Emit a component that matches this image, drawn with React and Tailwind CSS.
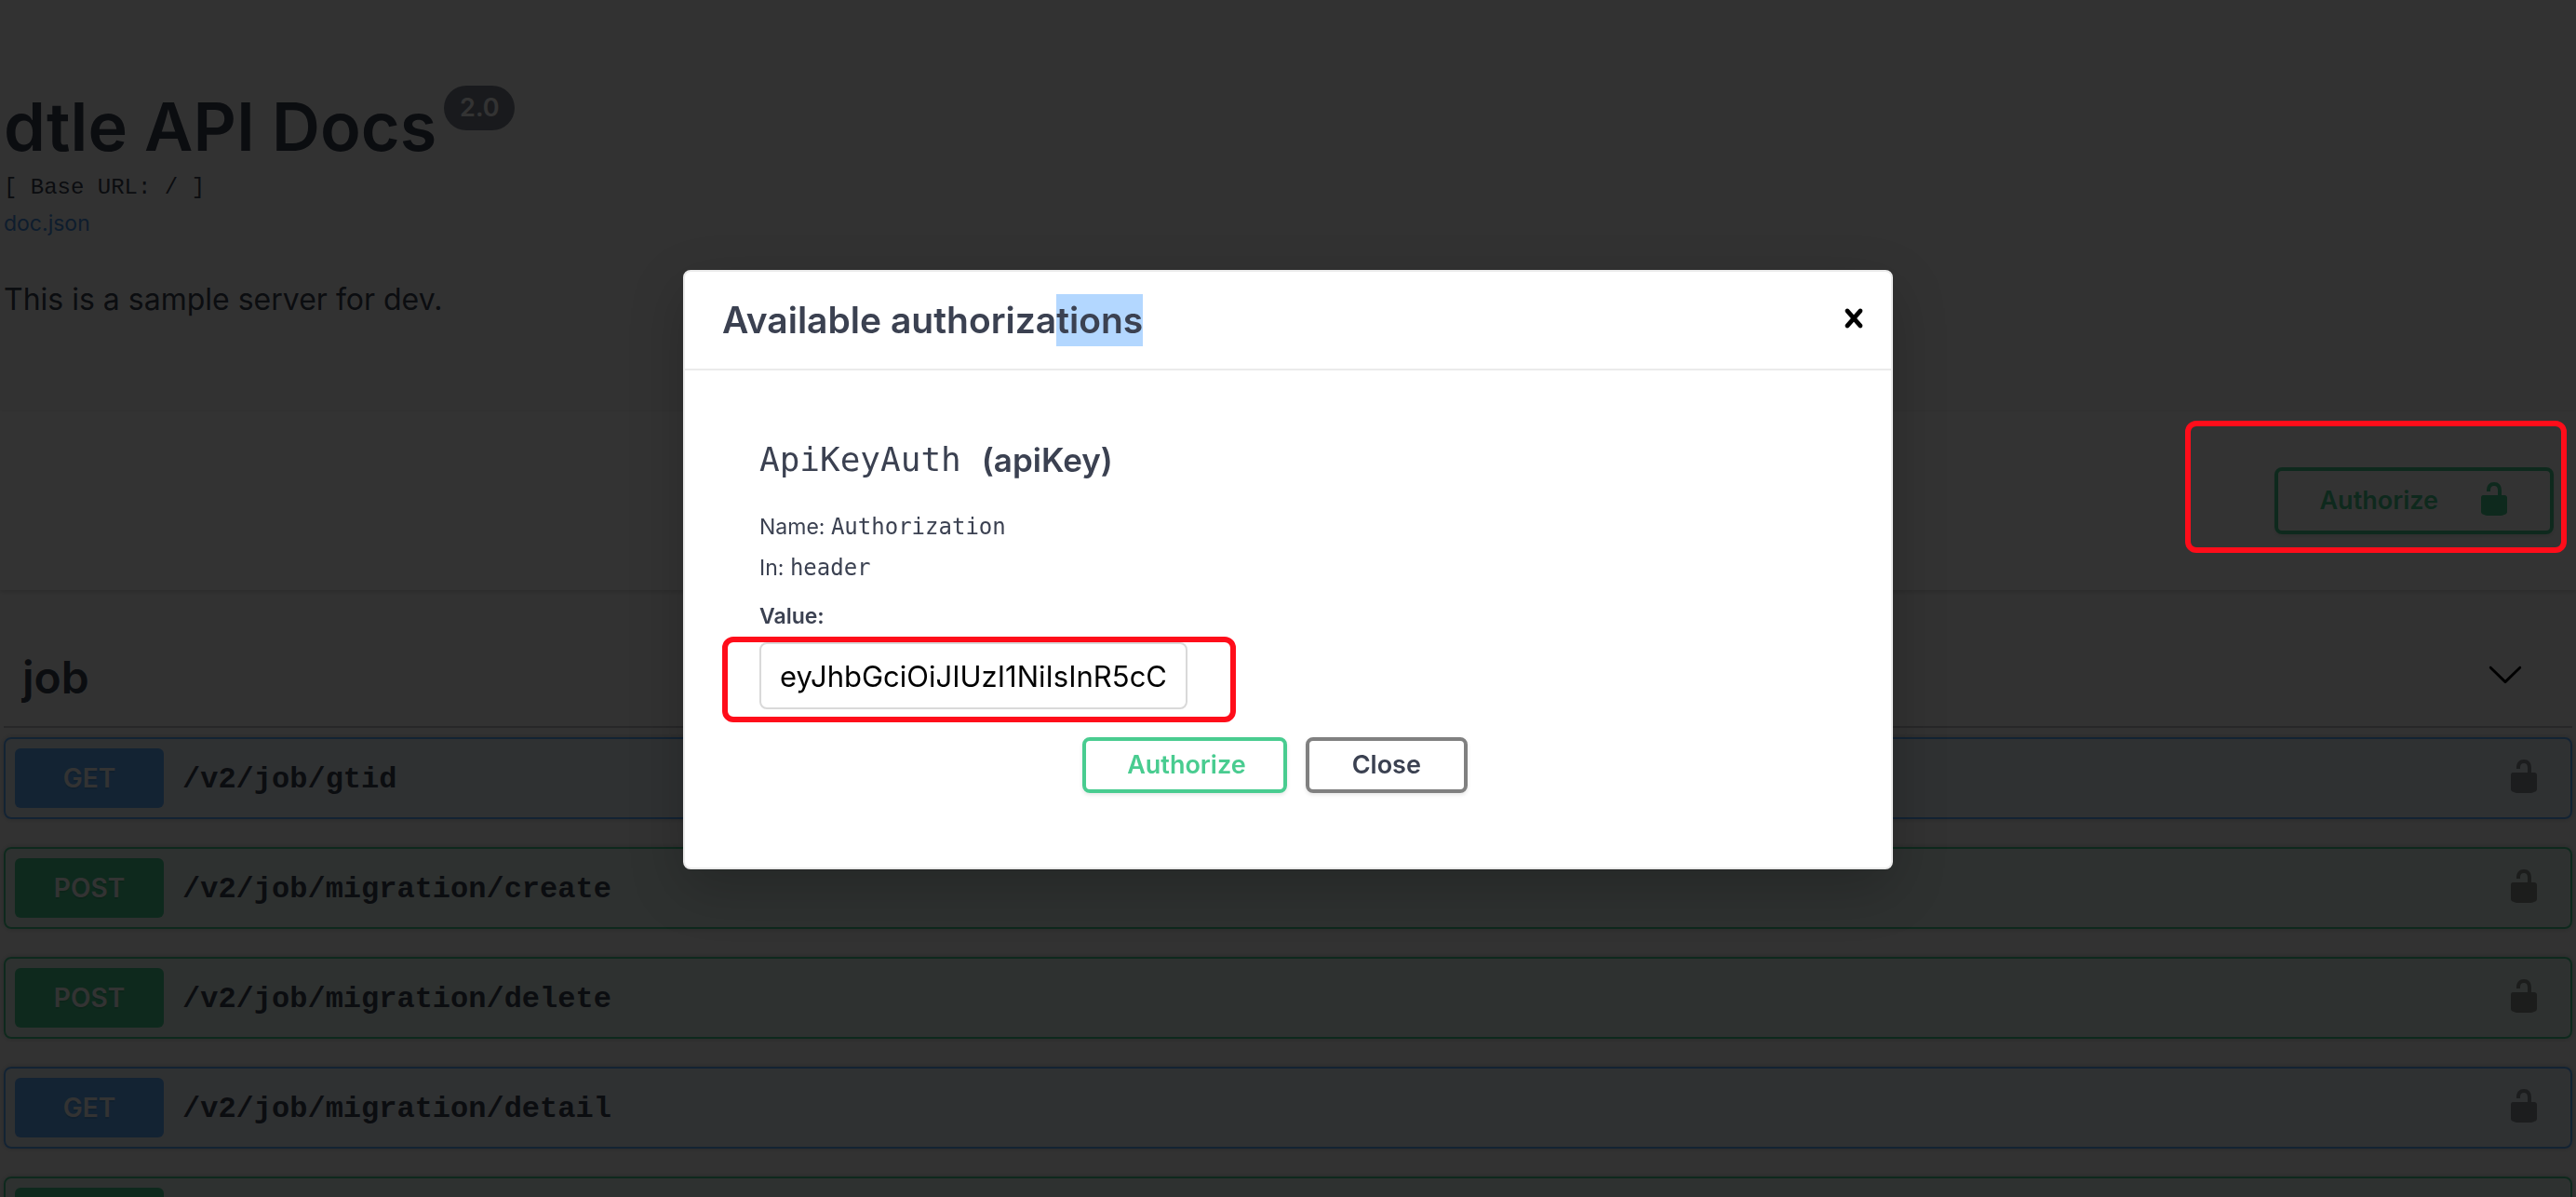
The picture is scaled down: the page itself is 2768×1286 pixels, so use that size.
import { useState } from "react";

function UnlockedIcon({ className }) {
  return (
    <svg viewBox="0 0 20 20" className={className} fill="currentColor" aria-hidden="true">
      <path d="M15.8 8H14V5.6C14 2.703 12.665 1 10 1 7.334 1 6 2.703 6 5.6V6h2v-.801C8 3.754 8.797 3 10 3c1.203 0 2 .754 2 2.199V8H4c-.553 0-1 .646-1 1.199V17c0 .549.428 1.139.951 1.307l1.197.387C5.672 18.861 6.55 19 7.1 19h5.8c.549 0 1.428-.139 1.951-.307l1.196-.387c.524-.167.953-.757.953-1.306V9.199C17 8.646 16.352 8 15.8 8z" />
    </svg>
  );
}

function ChevronIcon({ className }) {
  return (
    <svg viewBox="0 0 20 20" className={className} fill="currentColor" aria-hidden="true">
      <path d="M17.418 6.109c.272-.268.709-.268.979 0s.271.701 0 .969l-7.908 7.83c-.27.268-.707.268-.979 0l-7.908-7.83c-.27-.268-.27-.701 0-.969.271-.268.709-.268.979 0L10 13.25l7.418-7.141z" />
    </svg>
  );
}

function CloseIcon({ className }) {
  return (
    <svg viewBox="0 0 20 20" className={className} fill="currentColor" aria-hidden="true">
      <path d="M14.348 14.849c-.469.469-1.229.469-1.697 0L10 11.819l-2.651 3.029c-.469.469-1.229.469-1.697 0-.469-.469-.469-1.229 0-1.697l2.758-3.15-2.759-3.152c-.469-.469-.469-1.228 0-1.697.469-.469 1.228-.469 1.697 0L10 8.183l2.651-3.031c.469-.469 1.228-.469 1.697 0 .469.469.469 1.229 0 1.697l-2.758 3.152 2.758 3.15c.469.469.469 1.229 0 1.698z" />
    </svg>
  );
}

const operations = [
  { method: "GET", path: "/v2/job/gtid" },
  { method: "POST", path: "/v2/job/migration/create" },
  { method: "POST", path: "/v2/job/migration/delete" },
  { method: "GET", path: "/v2/job/migration/detail" },
  { method: "POST", path: "" },
];

const tones = {
  GET: { row: "border-[#61affe] bg-[#61affe]/10", pill: "bg-[#61affe]" },
  POST: { row: "border-[#49cc90] bg-[#49cc90]/10", pill: "bg-[#49cc90]" },
};

function Operation({ method, path }) {
  const tone = tones[method];
  return (
    <li className={`flex items-center rounded-lg border-2 p-[10px] shadow-[0_0_6px_rgba(0,0,0,0.19)] ${tone.row}`}>
      <span className={`flex h-16 w-40 items-center justify-center rounded-md text-[28px] leading-8 font-semibold text-white [text-shadow:0_2px_0_rgba(0,0,0,0.1)] ${tone.pill}`}>
        {method}
      </span>
      <a href="#operation" className="ml-5 pt-1 font-['Liberation_Mono',monospace] text-[32px] font-bold">
        {path}
      </a>
      <button type="button" aria-label="Operation authorization" className="mr-5 ml-auto pb-1 text-black opacity-40">
        <UnlockedIcon className="size-10" />
      </button>
    </li>
  );
}

function AuthorizationDialog() {
  const [value, setValue] = useState("eyJhbGciOiJIUzI1NiIsInR5cC");
  const mono = "font-['DejaVu_Sans_Mono',monospace]";
  return (
    <div className="fixed inset-0 flex items-start justify-center pt-[290px]">
      <section
        role="dialog"
        aria-labelledby="dialog-title"
        className="w-[1300px] max-w-full rounded-lg border-2 border-[#ebebeb] bg-white shadow-[0_20px_60px_rgba(0,0,0,0.2)]"
      >
        <header className="flex items-center justify-between border-b-2 border-[#ebebeb] py-6 pr-5 pl-10">
          <h3 id="dialog-title" className="text-[39px] leading-[56px] font-semibold">
            Available authoriza<span className="inline-block bg-[#b3d7ff]">tions</span>
          </h3>
          <button type="button" aria-label="Close dialog" className="pb-1 text-black">
            <CloseIcon className="size-10" />
          </button>
        </header>

        <div className="px-20 pt-[72px] pb-20">
          <h4 className="flex gap-[22px] text-[35px] leading-[48px] font-semibold">
            <code className={`text-[36px] font-normal ${mono}`}>ApiKeyAuth</code>
            <span>(apiKey)</span>
          </h4>
          <p className="mt-8 text-[23px] leading-8">
            Name: <code className={`text-[24px] ${mono}`}>Authorization</code>
          </p>
          <p className="mt-3 text-[23px] leading-8">
            In: <code className={`text-[24px] ${mono}`}>header</code>
          </p>
          <label htmlFor="api-key-value" className="mt-5 block text-[23px] leading-8 font-semibold">
            Value:
          </label>
          <div className="relative mt-3 w-[460px]">
            <input
              id="api-key-value"
              type="text"
              value={value}
              onChange={(e) => setValue(e.target.value)}
              className="block h-[72px] w-full rounded-lg border-2 border-[#d9d9d9] bg-white px-5 text-[31px] text-black"
            />
            <span className="pointer-events-none absolute -top-[6px] -right-[52px] -bottom-[14px] -left-10 rounded-xl border-[6px] border-[#ff0d1a]" />
          </div>

          <div className="mt-[30px] flex justify-center gap-5 pr-7 text-[27px] font-semibold">
            <button type="button" className="h-[60px] rounded-lg border-4 border-[#49cc90] pr-10 pl-11 text-[#49cc90] shadow-[0_2px_4px_rgba(0,0,0,0.1)]">
              Authorize
            </button>
            <button type="button" className="h-[60px] rounded-lg border-4 border-[#808080] px-[46px] shadow-[0_2px_4px_rgba(0,0,0,0.1)]">
              Close
            </button>
          </div>
        </div>
      </section>
    </div>
  );
}

export default function App() {
  return (
    <div className="h-screen overflow-hidden bg-[#fafafa] font-[Inter,sans-serif] text-[#3b4151]">
      <header className="px-1 pt-[92px] pb-24">
        <div className="flex items-start gap-2">
          <h1 className="mt-1 text-[72px] leading-[80px] font-semibold">dtle API Docs</h1>
          <span className="flex h-12 w-[76px] items-center justify-center rounded-full bg-[#7d8492] text-[27px] font-semibold text-white">
            2.0
          </span>
        </div>
        <p className="mt-[10px] font-['Liberation_Mono',monospace] text-[24px] leading-8">[ Base URL: / ]</p>
        <p className="mt-[6px] text-[23px] leading-8">
          <a href="#doc" className="text-[#4990e2]">doc.json</a>
        </p>
        <p className="mt-[42px] text-[32px] leading-[48px]">This is a sample server for dev.</p>
      </header>

      <section className="flex h-48 items-center justify-end bg-white px-6 shadow-[0_2px_4px_rgba(0,0,0,0.15)]">
        <div className="relative">
          <button
            type="button"
            className="flex h-[72px] items-center gap-10 rounded-lg border-4 border-[#49cc90] pr-10 pl-11 text-[27px] font-semibold text-[#49cc90] shadow-[0_2px_4px_rgba(0,0,0,0.1)]"
          >
            Authorize
            <span className="pb-1">
              <UnlockedIcon className="size-10" />
            </span>
          </button>
          <span className="pointer-events-none absolute -top-[50px] -right-[14px] -bottom-5 -left-24 z-20 rounded-xl border-[6px] border-[#ff0d1a]" />
        </div>
      </section>

      <main className="px-1 pt-[34px]">
        <h2 className="flex h-[114px] items-center justify-between border-b-2 border-[#3b4151]/30 pr-[52px] pl-5 text-[48px] font-semibold">
          <span className="pt-2">job</span>
          <button type="button" aria-label="Collapse job operations" className="text-black">
            <ChevronIcon className="size-10" />
          </button>
        </h2>
        <ul className="mt-[10px] flex flex-col gap-[30px]">
          {operations.map((op, i) => (
            <Operation key={i} {...op} />
          ))}
        </ul>
      </main>

      <div className="fixed inset-0 z-10 bg-black/80" />
      <div className="relative z-30">
        <AuthorizationDialog />
      </div>
    </div>
  );
}
